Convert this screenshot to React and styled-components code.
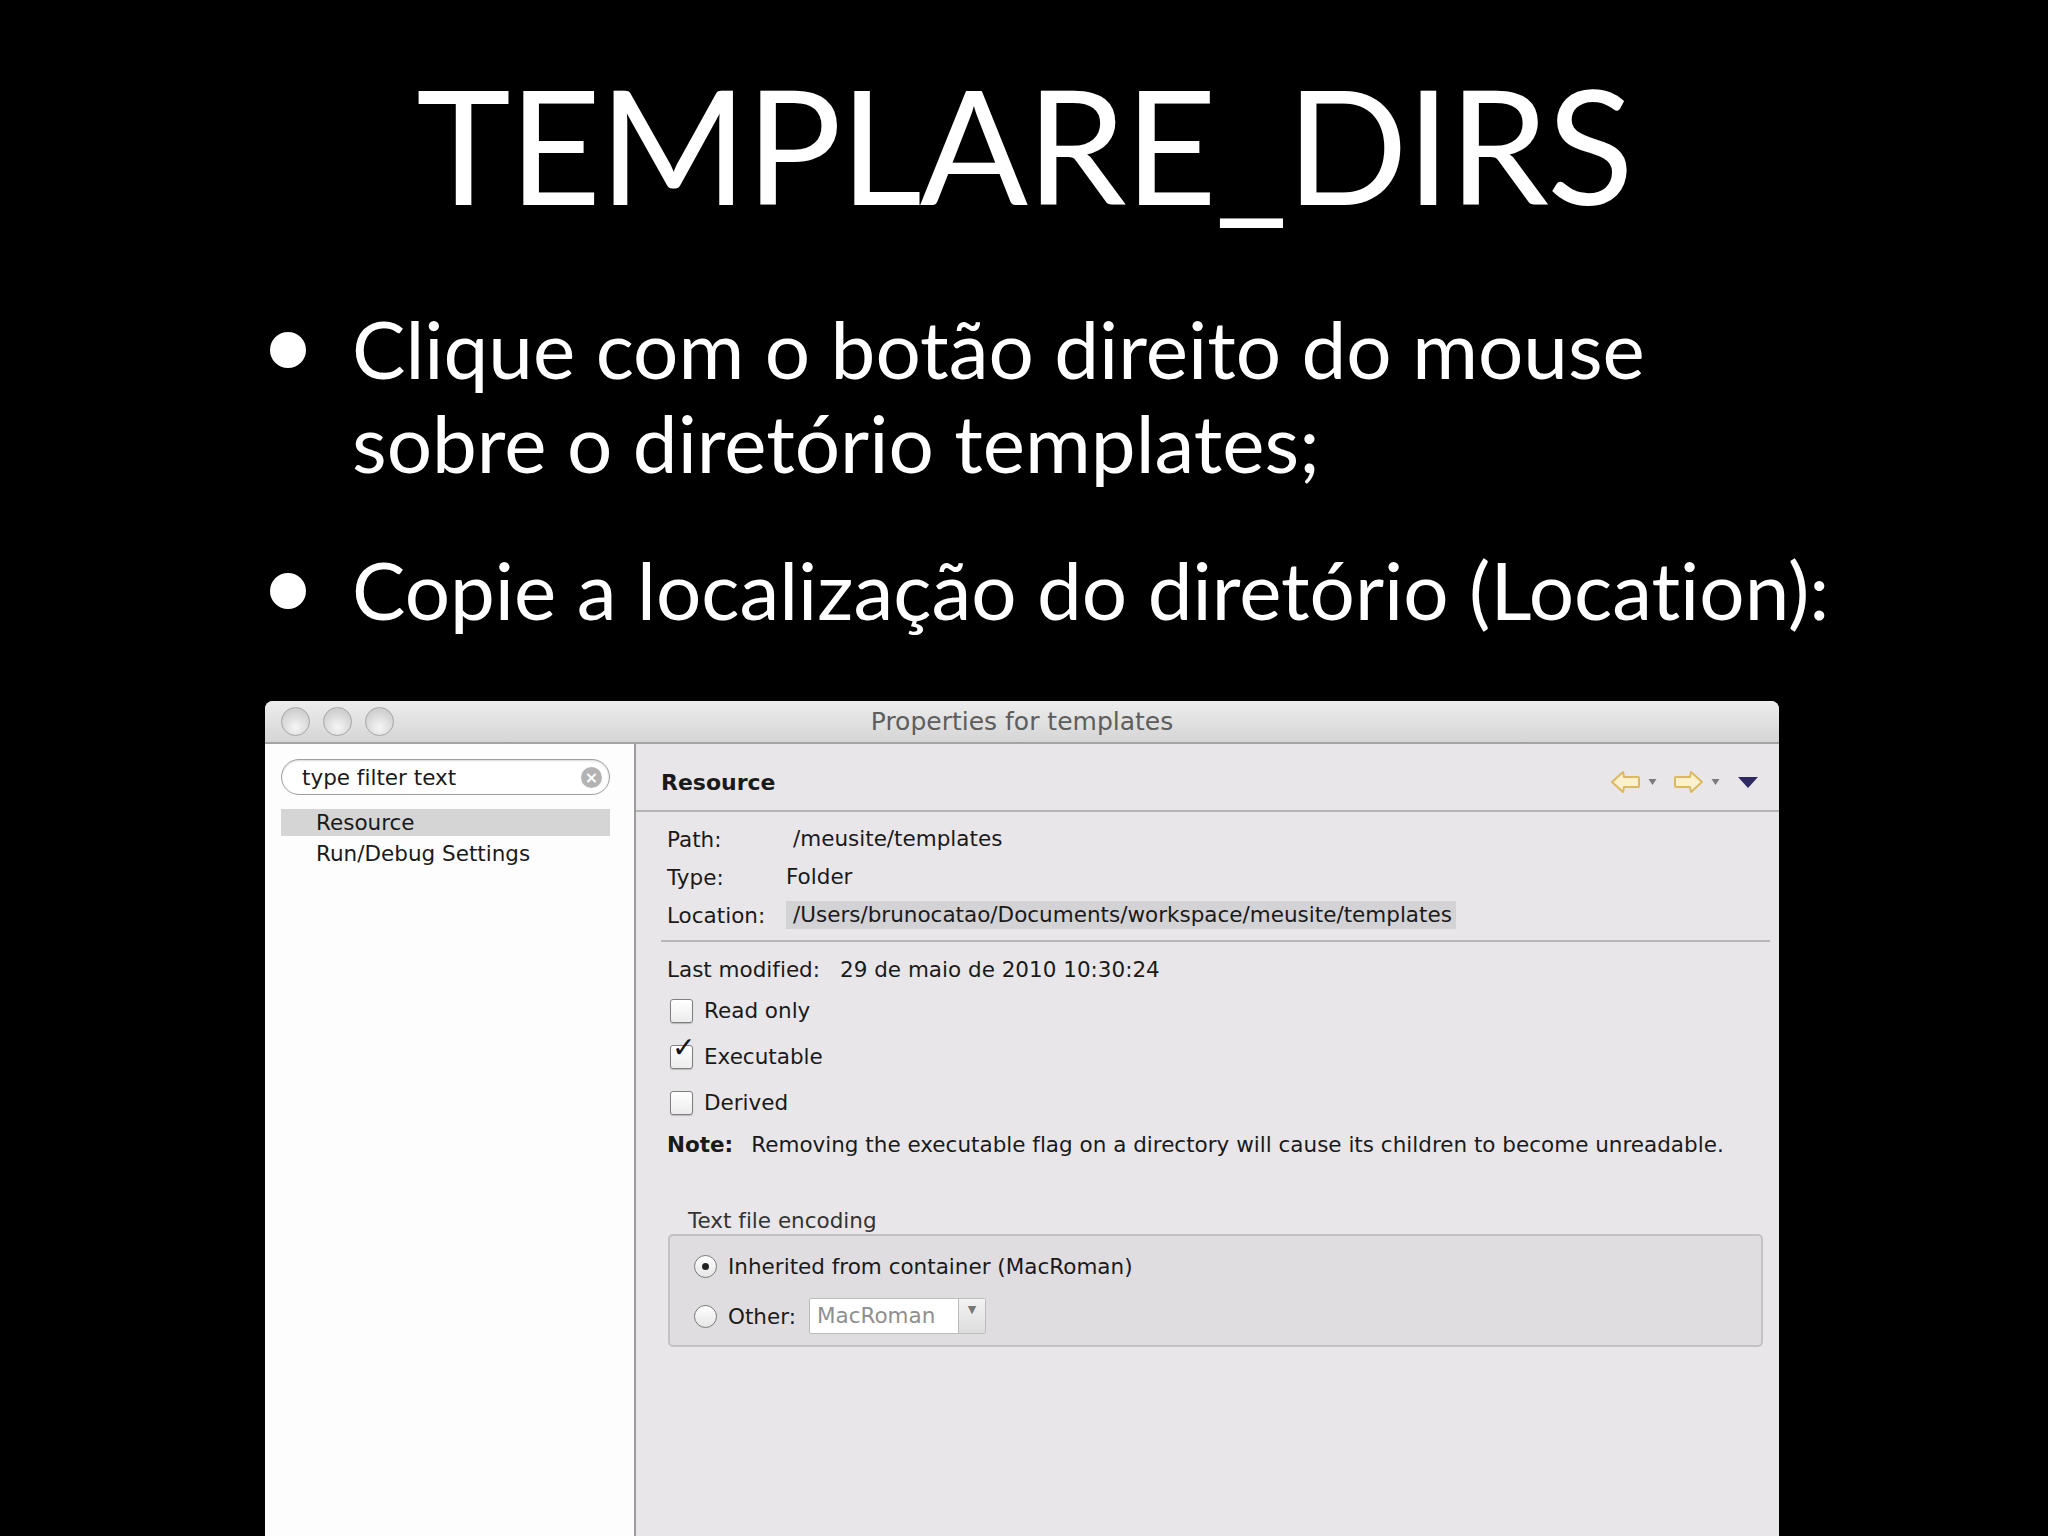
import React from "react";
import styled, { createGlobalStyle } from "styled-components";

const GlobalStyle = createGlobalStyle`
    html, body {
        margin: 0;
        padding: 0;
        background: #000;
    }
`

const Slide = styled.div`
    width: 2048px;
    height: 1536px;
    overflow: hidden;
    background: #000;
    display: flex;
    flex-direction: column;
    font-family: Lato, "Open Sans", sans-serif;
    font-variant-ligatures: none;
    color: #fff;
`

const Title = styled.h1`
    margin: 48px 0 0;
    font-weight: 400;
    font-size: 160px;
    line-height: 190px;
    text-align: center;
    letter-spacing: -2px;
`

const Bullets = styled.ul`
    list-style: none;
    margin: 63px 0 0;
    padding: 0 0 0 268px;
`

const Bullet = styled.li`
    display: flex;
    align-items: flex-start;
    font-size: 80px;
    line-height: 94px;
    margin-bottom: ${p => p.$gap || 0}px;
`

const Text = styled.span`
    max-width: 1500px;
`

const Dot = styled.span`
    flex: none;
    width: 36px;
    height: 36px;
    border-radius: 50%;
    background: #fff;
    margin: 31px 46px 0 2px;
`

/* ---- window ---- */

const Window = styled.div`
    flex: 1;
    margin: 65px 269px 0 265px;
    background: #e8e6e9;
    border-radius: 8px 8px 0 0;
    display: flex;
    flex-direction: column;
    overflow: hidden;
    font-family: "DejaVu Sans", Verdana, sans-serif;
    font-size: 21.5px;
    color: #1a1a1a;
`

const TitleBar = styled.div`
    height: 41px;
    flex: none;
    display: grid;
    grid-template-columns: 150px 1fr 150px;
    align-items: center;
    background: linear-gradient(#ededed, #d5d5d5);
    border-bottom: 2px solid #a3a3a3;
`

const Lights = styled.div`
    display: flex;
    gap: 13px;
    padding-left: 16px;
`

const Light = styled.span`
    width: 29px;
    height: 29px;
    border-radius: 50%;
    box-sizing: border-box;
    border: 1px solid #a5a5a5;
    background: radial-gradient(circle at 50% 72%, #f6f6f6, #d0d0d0 72%);
`

const WindowTitle = styled.div`
    text-align: center;
    color: #5e5e5e;
    font-size: 25px;
`

const Body = styled.div`
    flex: 1;
    display: grid;
    grid-template-columns: 371px 1fr;
`

const Sidebar = styled.div`
    background: #fdfdfd;
    border-right: 2px solid #9c9c9c;
    padding: 15px 24px 0 16px;
`

const Search = styled.div`
    height: 36px;
    box-sizing: border-box;
    border: 1px solid #9e9e9e;
    border-radius: 18px;
    background: #fff;
    box-shadow: inset 0 1px 2px rgba(0,0,0,0.15);
    display: flex;
    align-items: center;
    justify-content: space-between;
    padding: 0 7px 0 20px;
`

const ClearIcon = styled.span`
    width: 21px;
    height: 21px;
    border-radius: 50%;
    background: #b3b3b3;
    color: #fff;
    font-size: 16px;
    font-weight: bold;
    line-height: 21px;
    text-align: center;
`

const Tree = styled.div`
    margin-top: 14px;
    display: flex;
    flex-direction: column;
    gap: 4px;
`

const TreeItem = styled.div`
    height: 27px;
    line-height: 27px;
    padding-left: 35px;
    background: ${p => p.$selected ? "#d5d5d5" : "transparent"};
`

const Main = styled.div`
    display: flex;
    flex-direction: column;
`

const Header = styled.div`
    height: 68px;
    box-sizing: border-box;
    border-bottom: 2px solid #b4b4b4;
    display: flex;
    align-items: center;
    justify-content: space-between;
    padding: 10px 20px 0 25px;
    font-weight: bold;
    font-size: 22px;
`

const Nav = styled.div`
    display: flex;
    align-items: center;
`

const NavTri = styled.span`
    display: flex;
    margin: 0 ${p => p.$after}px 0 7px;
`

const Content = styled.div`
    padding: 13px 9px 0 25px;
    display: flex;
    flex-direction: column;
`

const InfoGrid = styled.div`
    display: grid;
    grid-template-columns: 119px 1fr;
    row-gap: 10px;
    padding-left: 6px;
    align-items: center;
`

const Value = styled.span`
    justify-self: start;
    padding: 1px 4px 1px ${p => p.$field ? 7 : 0}px;
    background: ${p => p.$sel ? "#d3d2d4" : "transparent"};
    line-height: 26px;
`

const Rule = styled.div`
    height: 2px;
    background: #b8b8b8;
    margin: 11px 0 15px;
`

const Line = styled.div`
    padding-left: 6px;
    line-height: 26px;
    display: flex;
    align-items: center;
    margin-top: ${p => p.$top || 0}px;
`

const Label = styled.span`
    margin-right: 20px;
`

const Check = styled.span`
    flex: none;
    width: 23px;
    height: 24px;
    box-sizing: border-box;
    border: 1px solid #7f7f7f;
    border-radius: 3px;
    background: linear-gradient(#fff, #ececec);
    box-shadow: 0 1px 1px rgba(0,0,0,0.2);
    margin: 0 11px 0 3px;
    position: relative;
`

const Tick = styled.span`
    position: absolute;
    left: 1px;
    top: -11px;
    font-size: 28px;
    font-weight: bold;
    color: #111;
`

const Bold = styled.b`
    margin-right: 18px;
`

const GroupLabel = styled.div`
    margin: 50px 0 0 27px;
    line-height: 26px;
    color: #333;
`

const Group = styled.div`
    margin: 0 7px 0 7px;
    height: 113px;
    box-sizing: border-box;
    border: 2px solid #c2c1c4;
    border-radius: 5px;
    background: #dfdde0;
    padding: 15px 0 0 24px;
    display: flex;
    flex-direction: column;
    gap: 20px;
`

const RadioRow = styled.div`
    display: flex;
    align-items: center;
    height: 30px;
`

const Radio = styled.span`
    flex: none;
    width: 23px;
    height: 23px;
    box-sizing: border-box;
    border: 1px solid #7a7a7a;
    border-radius: 50%;
    background: linear-gradient(#fff, #e6e6e6);
    margin-right: 11px;
    display: flex;
    align-items: center;
    justify-content: center;
    &::after {
        content: "";
        width: 7px;
        height: 7px;
        border-radius: 50%;
        background: ${p => p.$on ? "#222" : "transparent"};
    }
`

const Combo = styled.div`
    margin-left: 13px;
    height: 34px;
    display: flex;
    border: 1px solid #bcbcbc;
    border-radius: 2px;
    background: #fff;
`

const ComboText = styled.span`
    width: 148px;
    padding-left: 7px;
    box-sizing: border-box;
    line-height: 34px;
    color: #8f8f8f;
`

const ComboButton = styled.span`
    width: 26px;
    border-left: 1px solid #bcbcbc;
    background: linear-gradient(#f4f4f4, #dcdcdc);
    color: #777;
    font-size: 11px;
    text-align: center;
    line-height: 22px;
`

const Arrow = ({ dir }) => (
    <svg width="31" height="26" viewBox="0 0 31 26">
        <path
            d={dir === "left"
                ? "M2 13 L13 3 L14 8 L28 8 Q29 8 29 9 L29 17 Q29 18 28 18 L14 18 L13 23 Z"
                : "M29 13 L18 3 L17 8 L3 8 Q2 8 2 9 L2 17 Q2 18 3 18 L17 18 L18 23 Z"}
            fill="#fbf1cf"
            stroke="#dcb85e"
            strokeWidth="2"
            strokeLinejoin="round"
        />
    </svg>
)

const SmallTri = () => (
    <svg width="9" height="8" viewBox="0 0 9 8"><path d="M0.5 1 L8.5 1 L4.5 7 Z" fill="#7b7b7b" /></svg>
)

const BigTri = () => (
    <svg width="22" height="14" viewBox="0 0 22 14"><path d="M1 2 L21 2 L11 13 Z" fill="#2c2a5e" /></svg>
)

const App = () => (
    <>
        <GlobalStyle />
        <Slide>
            <Title>TEMPLARE_DIRS</Title>
            <Bullets>
                <Bullet $gap={53}>
                    <Dot />
                    <Text>Clique com o botão direito do mouse sobre o diretório templates;</Text>
                </Bullet>
                <Bullet>
                    <Dot />
                    <Text>Copie a localização do diretório (Location):</Text>
                </Bullet>
            </Bullets>

            <Window>
                <TitleBar>
                    <Lights>
                        <Light /><Light /><Light />
                    </Lights>
                    <WindowTitle>Properties for templates</WindowTitle>
                    <span />
                </TitleBar>
                <Body>
                    <Sidebar>
                        <Search>
                            <span>type filter text</span>
                            <ClearIcon>×</ClearIcon>
                        </Search>
                        <Tree>
                            <TreeItem $selected>Resource</TreeItem>
                            <TreeItem>Run/Debug Settings</TreeItem>
                        </Tree>
                    </Sidebar>
                    <Main>
                        <Header>
                            <span>Resource</span>
                            <Nav>
                                <Arrow dir="left" />
                                <NavTri $after={16}><SmallTri /></NavTri>
                                <Arrow dir="right" />
                                <NavTri $after={17}><SmallTri /></NavTri>
                                <BigTri />
                            </Nav>
                        </Header>
                        <Content>
                            <InfoGrid>
                                <span>Path:</span>
                                <Value $field>/meusite/templates</Value>
                                <span>Type:</span>
                                <Value>Folder</Value>
                                <span>Location:</span>
                                <Value $field $sel>/Users/brunocatao/Documents/workspace/meusite/templates</Value>
                            </InfoGrid>
                            <Rule />
                            <Line>
                                <Label>Last modified:</Label>
                                <span>29 de maio de 2010 10:30:24</span>
                            </Line>
                            <Line $top={15}><Check />Read only</Line>
                            <Line $top={20}><Check><Tick>✓</Tick></Check>Executable</Line>
                            <Line $top={20}><Check />Derived</Line>
                            <Line $top={16}><Bold>Note:</Bold>Removing the executable flag on a directory will cause its children to become unreadable.</Line>
                            <GroupLabel>Text file encoding</GroupLabel>
                            <Group>
                                <RadioRow><Radio $on />Inherited from container (MacRoman)</RadioRow>
                                <RadioRow>
                                    <Radio />Other:
                                    <Combo>
                                        <ComboText>MacRoman</ComboText>
                                        <ComboButton>▼</ComboButton>
                                    </Combo>
                                </RadioRow>
                            </Group>
                        </Content>
                    </Main>
                </Body>
            </Window>
        </Slide>
    </>
)

export default App;
